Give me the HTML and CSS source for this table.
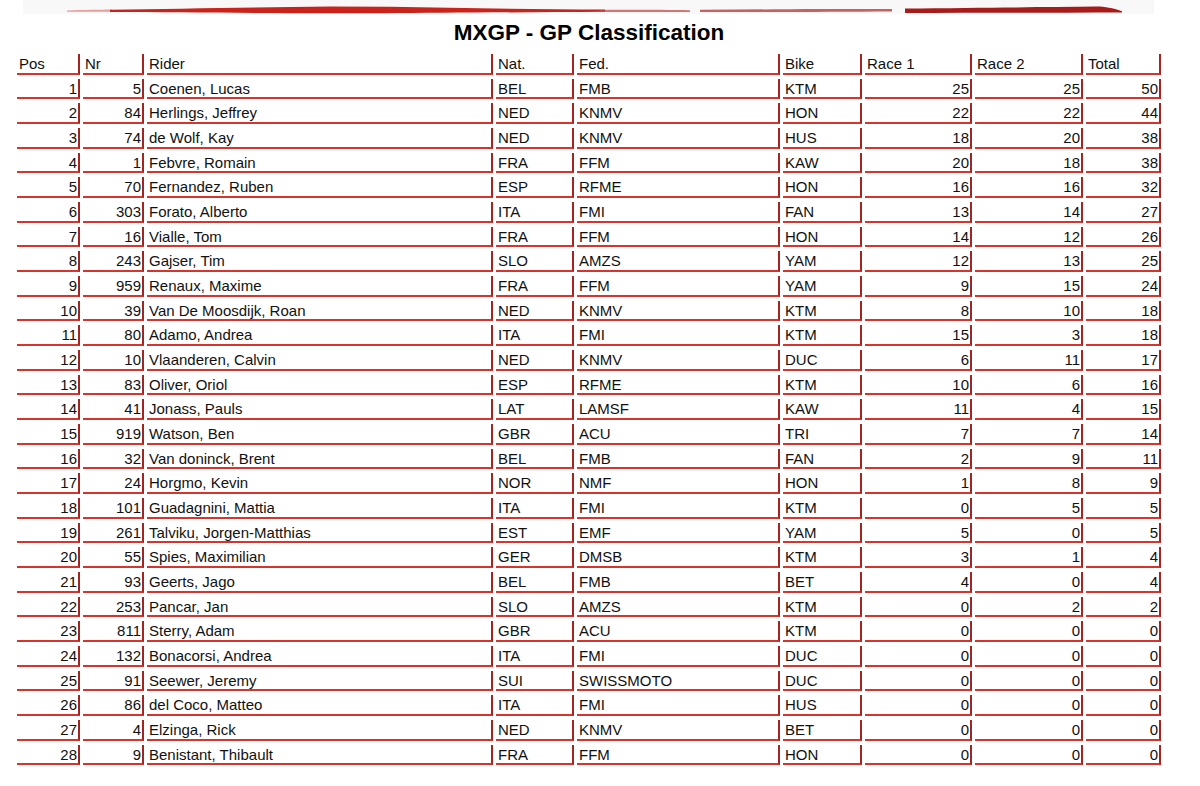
FILE: index.html
```html
<!DOCTYPE html>
<html>
<head>
<meta charset="utf-8">
<title>MXGP - GP Classification</title>
<link rel="stylesheet" href="styles.css">
</head>
<body>
<div class="banner">
  <svg width="1200" height="14" viewBox="0 0 1200 14">
    <rect x="23" y="0" width="1131" height="14" fill="#f8f8f8"/>
    <path d="M67,10.4 C85,10 100,9.8 112,9.6 L112,11.8 C100,11.8 85,11.9 67,11.8 Z" fill="#d8524a" opacity="0.55"/>
    <path d="M110,9.8 C180,8.8 250,7.4 330,6.6 L390,6.8 C460,8 530,9.2 605,9.6 L605,11.8 C520,12.3 440,12.8 385,13.2 L330,13.3 C250,12.9 180,12.4 110,12 Z" fill="#c9231c"/>
    <path d="M600,9.9 C640,9.8 670,10 690,10.3 L690,12 C660,12.2 630,12.1 600,12 Z" fill="#c74a44" opacity="0.75"/>
    <path d="M700,9.7 C770,9.3 840,9 892,9.1 L892,11.4 C840,11.8 770,12.1 700,12 Z" fill="#b8302b" opacity="0.75"/>
    <path d="M905,8.4 C980,7.8 1040,7.2 1096,6.6 C1106,6.6 1112,8.2 1122,11.2 L1122,12.4 C1040,12.7 970,12.9 905,12.9 Z" fill="#a71b1b"/>
  </svg>
</div>
<h1 class="title">MXGP - GP Classification</h1>
<table class="classification">
  <colgroup>
    <col class="c-pos"><col class="c-nr"><col class="c-rider"><col class="c-nat"><col class="c-fed"><col class="c-bike"><col class="c-r1"><col class="c-r2"><col class="c-tot">
  </colgroup>
  <thead>
    <tr><th>Pos</th><th>Nr</th><th>Rider</th><th>Nat.</th><th>Fed.</th><th>Bike</th><th>Race 1</th><th>Race 2</th><th>Total</th></tr>
  </thead>
  <tbody>
    <tr><td class="num">1</td><td class="num">5</td><td>Coenen, Lucas</td><td>BEL</td><td>FMB</td><td>KTM</td><td class="num">25</td><td class="num">25</td><td class="num">50</td></tr>
    <tr><td class="num">2</td><td class="num">84</td><td>Herlings, Jeffrey</td><td>NED</td><td>KNMV</td><td>HON</td><td class="num">22</td><td class="num">22</td><td class="num">44</td></tr>
    <tr><td class="num">3</td><td class="num">74</td><td>de Wolf, Kay</td><td>NED</td><td>KNMV</td><td>HUS</td><td class="num">18</td><td class="num">20</td><td class="num">38</td></tr>
    <tr><td class="num">4</td><td class="num">1</td><td>Febvre, Romain</td><td>FRA</td><td>FFM</td><td>KAW</td><td class="num">20</td><td class="num">18</td><td class="num">38</td></tr>
    <tr><td class="num">5</td><td class="num">70</td><td>Fernandez, Ruben</td><td>ESP</td><td>RFME</td><td>HON</td><td class="num">16</td><td class="num">16</td><td class="num">32</td></tr>
    <tr><td class="num">6</td><td class="num">303</td><td>Forato, Alberto</td><td>ITA</td><td>FMI</td><td>FAN</td><td class="num">13</td><td class="num">14</td><td class="num">27</td></tr>
    <tr><td class="num">7</td><td class="num">16</td><td>Vialle, Tom</td><td>FRA</td><td>FFM</td><td>HON</td><td class="num">14</td><td class="num">12</td><td class="num">26</td></tr>
    <tr><td class="num">8</td><td class="num">243</td><td>Gajser, Tim</td><td>SLO</td><td>AMZS</td><td>YAM</td><td class="num">12</td><td class="num">13</td><td class="num">25</td></tr>
    <tr><td class="num">9</td><td class="num">959</td><td>Renaux, Maxime</td><td>FRA</td><td>FFM</td><td>YAM</td><td class="num">9</td><td class="num">15</td><td class="num">24</td></tr>
    <tr><td class="num">10</td><td class="num">39</td><td>Van De Moosdijk, Roan</td><td>NED</td><td>KNMV</td><td>KTM</td><td class="num">8</td><td class="num">10</td><td class="num">18</td></tr>
    <tr><td class="num">11</td><td class="num">80</td><td>Adamo, Andrea</td><td>ITA</td><td>FMI</td><td>KTM</td><td class="num">15</td><td class="num">3</td><td class="num">18</td></tr>
    <tr><td class="num">12</td><td class="num">10</td><td>Vlaanderen, Calvin</td><td>NED</td><td>KNMV</td><td>DUC</td><td class="num">6</td><td class="num">11</td><td class="num">17</td></tr>
    <tr><td class="num">13</td><td class="num">83</td><td>Oliver, Oriol</td><td>ESP</td><td>RFME</td><td>KTM</td><td class="num">10</td><td class="num">6</td><td class="num">16</td></tr>
    <tr><td class="num">14</td><td class="num">41</td><td>Jonass, Pauls</td><td>LAT</td><td>LAMSF</td><td>KAW</td><td class="num">11</td><td class="num">4</td><td class="num">15</td></tr>
    <tr><td class="num">15</td><td class="num">919</td><td>Watson, Ben</td><td>GBR</td><td>ACU</td><td>TRI</td><td class="num">7</td><td class="num">7</td><td class="num">14</td></tr>
    <tr><td class="num">16</td><td class="num">32</td><td>Van doninck, Brent</td><td>BEL</td><td>FMB</td><td>FAN</td><td class="num">2</td><td class="num">9</td><td class="num">11</td></tr>
    <tr><td class="num">17</td><td class="num">24</td><td>Horgmo, Kevin</td><td>NOR</td><td>NMF</td><td>HON</td><td class="num">1</td><td class="num">8</td><td class="num">9</td></tr>
    <tr><td class="num">18</td><td class="num">101</td><td>Guadagnini, Mattia</td><td>ITA</td><td>FMI</td><td>KTM</td><td class="num">0</td><td class="num">5</td><td class="num">5</td></tr>
    <tr><td class="num">19</td><td class="num">261</td><td>Talviku, Jorgen-Matthias</td><td>EST</td><td>EMF</td><td>YAM</td><td class="num">5</td><td class="num">0</td><td class="num">5</td></tr>
    <tr><td class="num">20</td><td class="num">55</td><td>Spies, Maximilian</td><td>GER</td><td>DMSB</td><td>KTM</td><td class="num">3</td><td class="num">1</td><td class="num">4</td></tr>
    <tr><td class="num">21</td><td class="num">93</td><td>Geerts, Jago</td><td>BEL</td><td>FMB</td><td>BET</td><td class="num">4</td><td class="num">0</td><td class="num">4</td></tr>
    <tr><td class="num">22</td><td class="num">253</td><td>Pancar, Jan</td><td>SLO</td><td>AMZS</td><td>KTM</td><td class="num">0</td><td class="num">2</td><td class="num">2</td></tr>
    <tr><td class="num">23</td><td class="num">811</td><td>Sterry, Adam</td><td>GBR</td><td>ACU</td><td>KTM</td><td class="num">0</td><td class="num">0</td><td class="num">0</td></tr>
    <tr><td class="num">24</td><td class="num">132</td><td>Bonacorsi, Andrea</td><td>ITA</td><td>FMI</td><td>DUC</td><td class="num">0</td><td class="num">0</td><td class="num">0</td></tr>
    <tr><td class="num">25</td><td class="num">91</td><td>Seewer, Jeremy</td><td>SUI</td><td>SWISSMOTO</td><td>DUC</td><td class="num">0</td><td class="num">0</td><td class="num">0</td></tr>
    <tr><td class="num">26</td><td class="num">86</td><td>del Coco, Matteo</td><td>ITA</td><td>FMI</td><td>HUS</td><td class="num">0</td><td class="num">0</td><td class="num">0</td></tr>
    <tr><td class="num">27</td><td class="num">4</td><td>Elzinga, Rick</td><td>NED</td><td>KNMV</td><td>BET</td><td class="num">0</td><td class="num">0</td><td class="num">0</td></tr>
    <tr><td class="num">28</td><td class="num">9</td><td>Benistant, Thibault</td><td>FRA</td><td>FFM</td><td>HON</td><td class="num">0</td><td class="num">0</td><td class="num">0</td></tr>
  </tbody>
</table>
</body>
</html>
```
FILE: styles.css
```css
html, body {
  margin: 0;
  padding: 0;
  background: #ffffff;
}
body {
  font-family: "Liberation Sans", Arial, sans-serif;
  color: #111111;
}
.banner {
  height: 14px;
  overflow: hidden;
}
.banner svg {
  display: block;
}
.title {
  margin: 6px 0 0;
  padding-right: 22px;
  height: 26px;
  font-size: 22.5px;
  line-height: 26px;
  font-weight: bold;
  text-align: center;
  color: #000000;
}
.classification {
  margin: 4px 0 0 14px;
  table-layout: fixed;
  border-collapse: separate;
  border-spacing: 3px 4px;
  width: 1150px;
  font-size: 15px;
}
.c-pos { width: 63px; }
.c-nr { width: 61px; }
.c-rider { width: 346px; }
.c-nat { width: 78px; }
.c-fed { width: 203px; }
.c-bike { width: 79px; }
.c-r1 { width: 107px; }
.c-r2 { width: 108px; }
.c-tot { width: 75px; }
.classification th,
.classification td {
  box-sizing: border-box;
  height: 20.67px;
  padding: 1px 1px 0 2px;
  line-height: 17.67px;
  font-weight: normal;
  text-align: left;
  white-space: nowrap;
  overflow: hidden;
  vertical-align: middle;
  border-bottom: 2px solid #d5352d;
  border-right: 2px solid #a52420;
}
.classification td.num {
  text-align: right;
}
```
